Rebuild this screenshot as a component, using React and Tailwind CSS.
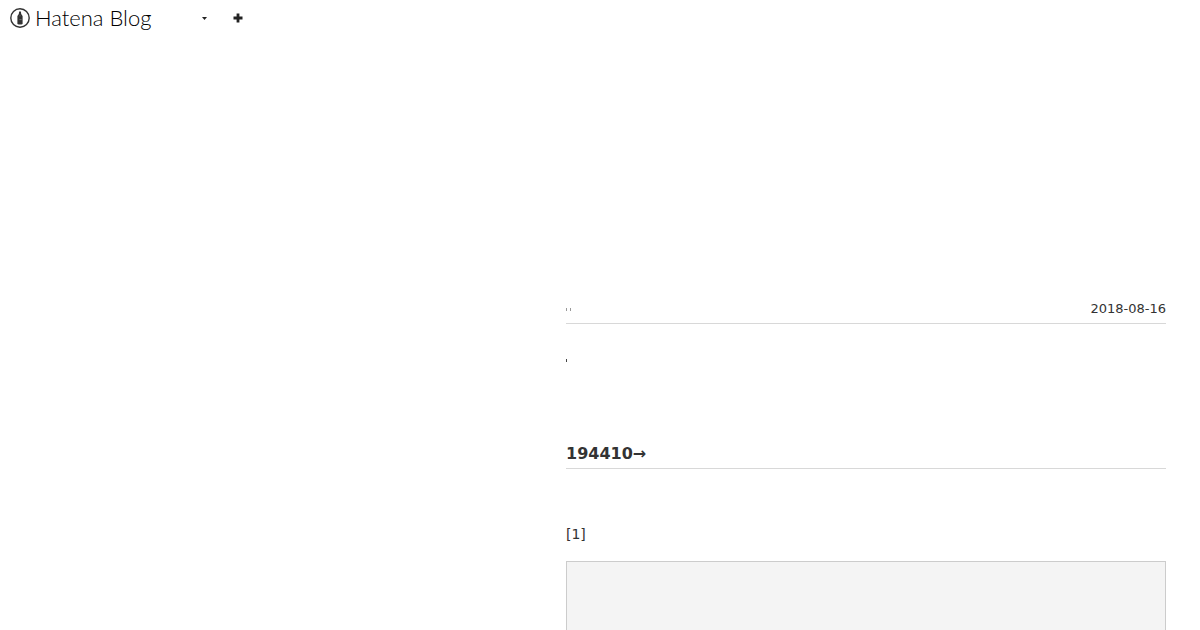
import React from 'react';

const HatenaMark = () => (
  <svg className="size-5 shrink-0" viewBox="0 0 20 20" aria-hidden="true">
    <circle cx="10" cy="10" r="9.2" fill="none" stroke="#333" strokeWidth="1.4" />
    <path
      d="M9.1 3.4h1.8l.3 2.6 1.4 2v8c-1.4.7-3.8.7-5.2 0v-8l1.4-2z"
      fill="#333"
    />
    <path d="M9.3 7.8h1.4" stroke="#888" strokeWidth=".6" />
    <path d="M9.4 11.6h2.2" fill="none" stroke="#888" strokeWidth=".7" />
  </svg>
);

const GlobalHeader = () => (
  <header className="flex h-9 shrink-0 items-center pl-[10px] text-[#333]">
    <a href="#" className="flex min-w-[142px] items-center gap-[5px]">
      <HatenaMark />
      <span className="whitespace-nowrap font-['Lato',sans-serif] text-[22px] leading-9 font-light text-black">
        Hatena Blog
      </span>
    </a>
    <button type="button" aria-label="Menu" className="ml-11 flex size-4 items-center justify-center">
      <svg className="h-[3px] w-[5px]" viewBox="0 0 5 3" aria-hidden="true">
        <path d="M0 0h5L2.5 3z" fill="#222" />
      </svg>
    </button>
    <a href="#" aria-label="Subscribe" className="ml-4 flex size-5 items-center justify-center">
      <svg className="size-[10px]" viewBox="0 0 10 10" aria-hidden="true">
        <path d="M5 0.5v9M0.5 5h9" stroke="#222" strokeWidth="2.8" />
      </svg>
    </a>
  </header>
);

const Entry = () => (
  <article className="mr-[34px] ml-auto w-full max-w-[600px]">
    <div className="flex h-[30px] items-start justify-between border-b border-[#d8d8d8] text-[13px] leading-[30px]">
      <span className="flex h-[30px] gap-[3px] pt-[14px]">
        <i className="h-[3px] w-px bg-[#999]" />
        <i className="h-[3px] w-px bg-[#999]" />
      </span>
      <a href="#">
        <time dateTime="2018-08-16">2018-08-16</time>
      </a>
    </div>

    <div className="flex h-[72px] items-center">
      <i className="h-[3px] w-px bg-[#444]" />
    </div>

    <h2 className="mt-[44px] border-b border-[#d8d8d8] pb-px text-base leading-[27px] font-bold">
      194410→
    </h2>

    <p className="mt-[52px] text-sm leading-[27px]">[1]</p>

    <div className="mt-[13px] h-40 border border-[#ccc] bg-[#f4f4f4]" />
  </article>
);

const App = () => (
  <div className="flex h-screen flex-col overflow-hidden bg-white font-['DejaVu_Sans',sans-serif] text-[#333]">
    <GlobalHeader />
    <main className="mt-[258px] flex">
      <Entry />
    </main>
  </div>
);

export default App;
